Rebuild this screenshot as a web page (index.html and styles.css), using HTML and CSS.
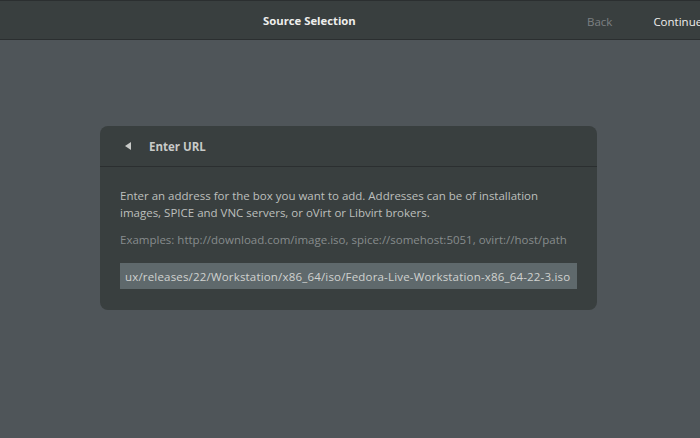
FILE: index.html
```html
<!DOCTYPE html>
<html>
<head>
<meta charset="utf-8">
<link rel="stylesheet" href="styles.css">
</head>
<body>
<div class="header">
  <div class="title">Source Selection</div>
  <div class="buttons">
    <span class="btn back">Back</span>
    <span class="btn cont">Continue</span>
  </div>
</div>
<div class="main">
  <div class="card">
    <div class="card-head">
      <svg class="arrow" width="8" height="8" viewBox="0 0 8 8"><polygon points="7,0 7,8 1,4" fill="#c8cac8"/></svg>
      <span class="card-title">Enter URL</span>
    </div>
    <div class="card-body">
      <p class="desc">Enter an address for the box you want to add. Addresses can be of installation images, SPICE and VNC servers, or oVirt or Libvirt brokers.</p>
      <p class="examples">Examples: http://download.com/image.iso, spice://somehost:5051, ovirt://host/path</p>
      <div class="entry"><span>ux/releases/22/Workstation/x86_64/iso/Fedora-Live-Workstation-x86_64-22-3.iso</span></div>
    </div>
  </div>
</div>
</body>
</html>
```
FILE: styles.css
```css
html, body {
  margin: 0;
  padding: 0;
  width: 700px;
  height: 438px;
  overflow: hidden;
  background: #4f5559;
  font-family: "Open Sans", "Noto Sans", sans-serif;
}
.header {
  height: 38px;
  background: #393f3f;
  border-top: 1px solid #2b2f30;
  border-bottom: 1px solid #2b2f30;
  display: flex;
  align-items: center;
  position: relative;
  white-space: nowrap;
}
.title {
  position: absolute;
  left: 263px;
  top: 12px;
  color: #eeeeec;
  font-weight: bold;
  font-size: 11.3px;
}
.buttons {
  margin-left: 587px;
  display: flex;
  gap: 41px;
  font-size: 11.5px;
  padding-top: 2px;
}
.back { color: #7c8082; }
.cont { color: #eeeeec; }
.main {
  padding-top: 86px;
  padding-left: 100px;
  display: flex;
}
.card {
  width: 497px;
  background: #393f3f;
  border-radius: 8px;
  overflow: hidden;
}
.card-head {
  height: 40px;
  border-bottom: 1px solid #2b2f30;
  display: flex;
  align-items: center;
  padding-left: 24px;
}
.arrow { margin-right: 17px; }
.card-title {
  color: #c8cac8;
  font-weight: bold;
  font-size: 11.5px;
}
.card-body {
  padding: 20px 20px 21px 20px;
}
.desc {
  margin: 0;
  color: #bdbfbd;
  font-size: 11.5px;
  line-height: 17px;
}
.examples {
  margin: 10px 0 0 0;
  color: #878c8d;
  font-size: 11.5px;
  line-height: 17px;
}
.entry {
  margin-top: 15px;
  height: 26px;
  background: #5f696c;
  display: flex;
  align-items: center;
  padding-left: 5px;
  overflow: hidden;
  white-space: nowrap;
  font-size: 11.5px;
  letter-spacing: 0.18px;
  color: #d0d2d0;
}
```
